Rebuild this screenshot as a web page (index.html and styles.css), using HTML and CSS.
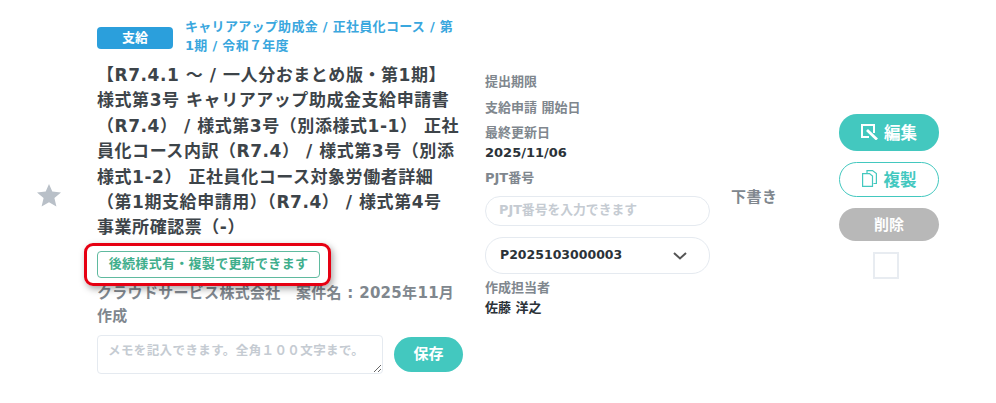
FILE: index.html
```html
<!DOCTYPE html>
<html lang="ja">
<head>
<meta charset="utf-8">
<title>案件</title>
<link rel="stylesheet" href="styles.css">
</head>
<body>
<div class="row">
  <div class="star-col">
    <svg class="star" viewBox="0 0 24 23" width="24" height="23"><path d="M12 0l3.300 7.600 8.700.8-6.600 5.600 2 8.500L12 18.200 4.600 22.500l2-8.500L0 8.400l8.700-.8z"/></svg>
  </div>
  <div class="main">
    <div class="head">
      <span class="badge">支給</span>
      <a class="course">キャリアアップ助成金 / 正社員化コース / 第1期 / 令和７年度</a>
    </div>
    <h2 class="title">【R7.4.1 ～ / 一人分おまとめ版・第1期】 様式第3号 キャリアアップ助成金支給申請書（R7.4） / 様式第3号（別添様式1-1） 正社員化コース内訳（R7.4） / 様式第3号（別添様式1-2） 正社員化コース対象労働者詳細（第1期支給申請用）（R7.4） / 様式第4号 事業所確認票（-）</h2>
    <div class="notice-wrap"><span class="notice">後続様式有・複製で更新できます</span></div>
    <p class="company">クラウドサービス株式会社　案件名 : 2025年11月作成</p>
    <div class="memo-row">
      <textarea class="memo" placeholder="メモを記入できます。全角１００文字まで。"></textarea>
      <button class="btn btn-save">保存</button>
    </div>
  </div>
  <div class="meta">
    <div class="label l1">提出期限</div>
    <div class="label l2">支給申請 開始日</div>
    <div class="label l3">最終更新日</div>
    <div class="value">2025/11/06</div>
    <div class="label l4">PJT番号</div>
    <input class="pjt" placeholder="PJT番号を入力できます">
    <div class="select"><span>P2025103000003</span>
      <svg viewBox="0 0 14 8" width="14" height="8"><path d="M1 1l6 5.500L13 1" fill="none" stroke="#555" stroke-width="2"/></svg>
    </div>
    <div class="label l5">作成担当者</div>
    <div class="value">佐藤 洋之</div>
  </div>
  <div class="status">下書き</div>
  <div class="actions">
    <button class="btn btn-edit">
      <svg viewBox="0 0 17 16" width="17" height="16"><path d="M13 9V1H1v12h7" fill="none" stroke="#fff" stroke-width="2"/><path d="M6 6l10 9.500" fill="none" stroke="#fff" stroke-width="2.800"/></svg>編集</button>
    <button class="btn btn-copy">
      <svg viewBox="0 0 15 17" width="15" height="17"><path d="M5 3V.6h5.500L14.400 3.500v10H11.500M.6 3.600h6.900l3 2.500v10.300H.6z" fill="none" stroke="#43c8bf" stroke-width="1.200"/></svg>複製</button>
    <button class="btn btn-del">削除</button>
    <span class="check"></span>
  </div>
</div>
</body>
</html>
```
FILE: styles.css
```css
*, *::after { box-sizing: border-box; }
html, body { margin: 0; padding: 0; background: #fff; }
body {
  width: 996px;
  height: 403px;
  overflow: hidden;
  font-family: "DejaVu Sans", "Noto Sans CJK JP", sans-serif;
  color: #3d4449;
}
.row { display: flex; align-items: flex-start; padding-top: 17px; }
.star-col { width: 97px; padding: 167px 0 0 37px; flex: none; }
.star { display: block; fill: #b9c0c8; }
.main { width: 366px; flex: none; }
.head { display: flex; align-items: flex-start; gap: 12px; }
.badge {
  flex: none;
  width: 76px;
  height: 22px;
  margin-top: 10px;
  background: #2b9fdc;
  border-radius: 4px;
  color: #fff;
  font-size: 13px;
  font-weight: 700;
  line-height: 21px;
  text-align: center;
}
.course {
  color: #3aa7de;
  font-size: 13px;
  font-weight: 700;
  letter-spacing: 0.3px;
  line-height: 19px;
  width: 276px;
}
.title {
  margin: 8px 0 0;
  font-size: 17px;
  font-weight: 700;
  letter-spacing: 0.55px;
  line-height: 25.4px;
  color: #3d4449;
}
.notice-wrap { position: relative; margin-top: 10px; height: 27px; }
.notice-wrap::after {
  content: "";
  position: absolute;
  left: -13px;
  top: -8px;
  width: 247px;
  height: 43px;
  border: 3px solid #e60012;
  border-radius: 9px;
  box-shadow: 2px 3px 7px rgba(0,0,0,.35);
}
.notice {
  display: block;
  width: 223px;
  height: 27px;
  border: 1px solid #5fba9f;
  border-radius: 4px;
  color: #3fae8c;
  font-size: 13px;
  font-weight: 700;
  letter-spacing: 0.3px;
  line-height: 24px;
  text-align: center;
  white-space: nowrap;
}
.company {
  margin: 4px 0 0;
  color: #80878e;
  font-size: 15px;
  font-weight: 700;
  letter-spacing: 0.3px;
  line-height: 23.5px;
}
.memo-row { display: flex; align-items: center; gap: 11px; margin-top: 6px; }
.memo {
  width: 286px;
  height: 39px;
  border: 1px solid #e5eaf0;
  border-radius: 4px;
  padding: 6px 10px;
  font: 700 12.5px/18px "DejaVu Sans", "Noto Sans CJK JP", sans-serif;
  letter-spacing: 0.4px;
  outline: none;
}
.memo::placeholder, .pjt::placeholder { color: #c5cbd2; opacity: 1; }
.btn {
  border: 0;
  padding: 0;
  border-radius: 18px;
  font-family: inherit;
  font-weight: 700;
  color: #fff;
  display: flex;
  align-items: center;
  justify-content: center;
}
.btn-save { width: 69px; height: 35px; padding-bottom: 3px; background: #43c8bf; font-size: 15px; }
.meta { width: 225px; margin-left: 22px; flex: none; padding-top: 56px; }
.label { color: #80878e; font-size: 13px; font-weight: 700; line-height: 18px; }
.l2 { margin-top: 8px; }
.l3 { margin-top: 7px; }
.l4 { margin-top: 6px; }
.l5 { margin-top: 5px; }
.value { color: #2b3238; font-size: 13px; font-weight: 700; line-height: 20px; margin-top: 1px; }
.pjt {
  display: block;
  width: 225px;
  height: 30px;
  margin-top: 9px;
  border: 1px solid #e5eaf0;
  border-radius: 15px;
  padding: 0 13px 3px;
  font: 700 12.8px "DejaVu Sans", "Noto Sans CJK JP", sans-serif;
  outline: none;
}
.select {
  display: flex;
  align-items: center;
  justify-content: space-between;
  width: 225px;
  height: 37px;
  margin-top: 11px;
  border: 1px solid #e5eaf0;
  border-radius: 18px;
  padding: 0 22px 0 14px;
  color: #2b3238;
  font-size: 12.5px;
  font-weight: 700;
}
.select span { margin-top: -3px; }
.status { width: 108px; margin-left: 21px; flex: none; padding-top: 170px; color: #80878e; font-size: 15px; font-weight: 700; letter-spacing: .5px; line-height: 20px; }
.actions { width: 100px; flex: none; display: flex; flex-direction: column; align-items: center; padding-top: 97px; }
.actions .btn { width: 100px; }
.btn-edit { height: 37px; padding-bottom: 2px; background: #43c8bf; font-size: 16.5px; gap: 6px; }
.btn-copy { height: 35px; margin-top: 11px; padding-bottom: 2px; background: #fff; border: 1px solid #43c8bf !important; color: #43c8bf; font-size: 16.5px; gap: 7px; }
.btn-del { height: 33px; margin-top: 11px; padding-bottom: 2px; background: #b8b8b8; font-size: 15px; }
.check { width: 26px; height: 27px; margin: 11px 6px 0 0; border: 2px solid #e8ecf1; }
```
